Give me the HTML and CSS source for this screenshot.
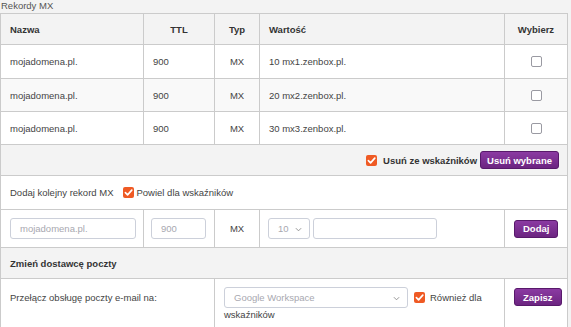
FILE: index.html
```html
<!DOCTYPE html>
<html lang="pl">
<head>
    <meta charset="UTF-8">
    <meta name="viewport" content="width=device-width, initial-scale=1.0">
    <title>Rekordy MX</title>
    <link rel="stylesheet" href="styles.css">
</head>
<body>
    <div class="caption">Rekordy MX</div>
    <table class="mx-table">
        <colgroup>
            <col class="col-name">
            <col class="col-ttl">
            <col class="col-type">
            <col class="col-value">
            <col class="col-pick">
        </colgroup>
        <tr class="head">
            <th class="left">Nazwa</th>
            <th>TTL</th>
            <th>Typ</th>
            <th class="left">Wartość</th>
            <th>Wybierz</th>
        </tr>
        <tr class="rec">
            <td>mojadomena.pl.</td>
            <td>900</td>
            <td class="center">MX</td>
            <td>10 mx1.zenbox.pl.</td>
            <td class="center"><span class="box"></span></td>
        </tr>
        <tr class="rec alt">
            <td>mojadomena.pl.</td>
            <td>900</td>
            <td class="center">MX</td>
            <td>20 mx2.zenbox.pl.</td>
            <td class="center"><span class="box"></span></td>
        </tr>
        <tr class="rec">
            <td>mojadomena.pl.</td>
            <td>900</td>
            <td class="center">MX</td>
            <td>30 mx3.zenbox.pl.</td>
            <td class="center"><span class="box"></span></td>
        </tr>
        <tr class="actions">
            <td colspan="5">
                <div class="action-bar">
                    <span class="box checked"><svg viewBox="0 0 12 12"><path d="M2.6 6.2 L5 8.6 L9.6 3.4" /></svg></span>
                    <b class="bold-label">Usuń ze wskaźników</b>
                    <button class="btn wide-btn">Usuń wybrane</button>
                </div>
            </td>
        </tr>
        <tr class="add-title">
            <td colspan="5">
                <div class="inline-row">
                    <span>Dodaj kolejny rekord MX</span>
                    <span class="box checked"><svg viewBox="0 0 12 12"><path d="M2.6 6.2 L5 8.6 L9.6 3.4" /></svg></span>
                    <span>Powiel dla wskaźników</span>
                </div>
            </td>
        </tr>
        <tr class="add-row">
            <td><div class="field wide">mojadomena.pl.</div></td>
            <td class="center"><div class="field short">900</div></td>
            <td class="center">MX</td>
            <td>
                <div class="inline-row tight">
                    <div class="field prio">10<svg class="chev" viewBox="0 0 8 5"><path d="M1 1 L4 4 L7 1" /></svg></div>
                    <div class="field host"></div>
                </div>
            </td>
            <td class="center"><button class="btn">Dodaj</button></td>
        </tr>
        <tr class="section">
            <th class="left" colspan="5">Zmień dostawcę poczty</th>
        </tr>
        <tr class="provider">
            <td colspan="2">Przełącz obsługę poczty e-mail na:</td>
            <td colspan="2" class="provider-cell">
                <div class="provider-line">
                    <div class="field select">Google Workspace<svg class="chev" viewBox="0 0 8 5"><path d="M1 1 L4 4 L7 1" /></svg></div>
                    <span class="box checked"><svg viewBox="0 0 12 12"><path d="M2.6 6.2 L5 8.6 L9.6 3.4" /></svg></span>
                    <span>Również dla</span>
                </div>
                <div class="wrap-line">wskaźników</div>
            </td>
            <td class="center"><button class="btn">Zapisz</button></td>
        </tr>
    </table>
</body>
</html>
```

FILE: styles.css
```css
body {
    margin: 0;
    background-color: #f3f3f3;
    font-family: 'Liberation Sans', Arial, sans-serif;
    font-size: 9.5px;
    color: #444;
    height: 327px;
    overflow: hidden;
}
.caption {
    height: 13px;
    line-height: 12px;
    color: #555;
    padding-left: 1px;
}
.mx-table {
    width: 567px;
    border-collapse: collapse;
    table-layout: fixed;
}
.col-name { width: 143px; }
.col-ttl { width: 71px; }
.col-type { width: 45px; }
.col-value { width: 245px; }
.col-pick { width: 63px; }
.mx-table th,
.mx-table td {
    border: 1px solid #cbcbcb;
    padding: 0 9px;
    vertical-align: middle;
}
.mx-table th {
    background-color: #f3f3f3;
    color: #333;
    font-weight: bold;
    text-align: center;
}
.mx-table th.left {
    text-align: left;
}
.mx-table td {
    background-color: #fff;
}
.center {
    text-align: center;
}
.head { height: 31px; }
.rec { height: 34px; }
.rec.alt td { background-color: #f9f9f9; }
.rec + .rec { height: 33px; }
.mx-table .actions td {
    background-color: #f3f3f3;
    height: 30px;
    padding-right: 8px;
}
.action-bar {
    display: flex;
    justify-content: flex-end;
    align-items: center;
    gap: 6px;
}
.bold-label {
    color: #333;
    margin-right: -3px;
}
.add-title { height: 34px; }
.add-row { height: 38px; }
.section { height: 31px; }
.inline-row {
    display: flex;
    align-items: center;
    gap: 4px;
}
.inline-row .box { margin-left: 5px; margin-right: -1px; }
.inline-row.tight { gap: 3px; }
.box {
    display: inline-block;
    width: 9px;
    height: 9px;
    border: 1.5px solid #9a9aa2;
    border-radius: 2px;
    background-color: #fff;
    vertical-align: middle;
}
.box.checked {
    width: 11px;
    height: 11px;
    border: none;
    background-color: #ef5a24;
    flex-shrink: 0;
}
.box.checked svg {
    width: 11px;
    height: 11px;
    display: block;
}
.box.checked path {
    fill: none;
    stroke: #fff;
    stroke-width: 1.8;
    stroke-linecap: round;
    stroke-linejoin: round;
}
.field {
    box-sizing: border-box;
    height: 21px;
    line-height: 19px;
    border: 1px solid #ccd0da;
    border-radius: 3px;
    background-color: #fff;
    color: #a8a8b0;
    padding: 0 9px;
    text-align: left;
    position: relative;
}
.field.wide { width: 126px; }
.field.short { width: 55px; margin-left: -2px; }
.field.prio { width: 42px; margin-left: -1px; }
.field.host { width: 124px; }
.field.select {
    width: 184px;
    margin-right: 1px;
}
.chev {
    position: absolute;
    right: 7px;
    top: 8px;
    width: 7px;
    height: 5px;
}
.chev path {
    fill: none;
    stroke: #888;
    stroke-width: 1;
}
.btn {
    font-family: 'Liberation Sans', Arial, sans-serif;
    font-size: 9.5px;
    font-weight: bold;
    color: #fff;
    background: linear-gradient(#8b3aa2, #6c2581);
    border: 1px solid #58196b;
    border-radius: 3px;
    padding: 0 8px;
    height: 18px;
    cursor: pointer;
}
.btn.wide-btn {
    padding: 0 6px;
}
.provider td {
    vertical-align: top;
    padding-top: 9px;
    height: 40px;
}
.provider td:first-child {
    padding-top: 13px;
}
.mx-table .provider-cell {
    padding-top: 8px;
}
.provider-line {
    display: flex;
    align-items: center;
    gap: 5px;
}
.wrap-line {
    line-height: 12px;
    margin-top: 1px;
}
```
